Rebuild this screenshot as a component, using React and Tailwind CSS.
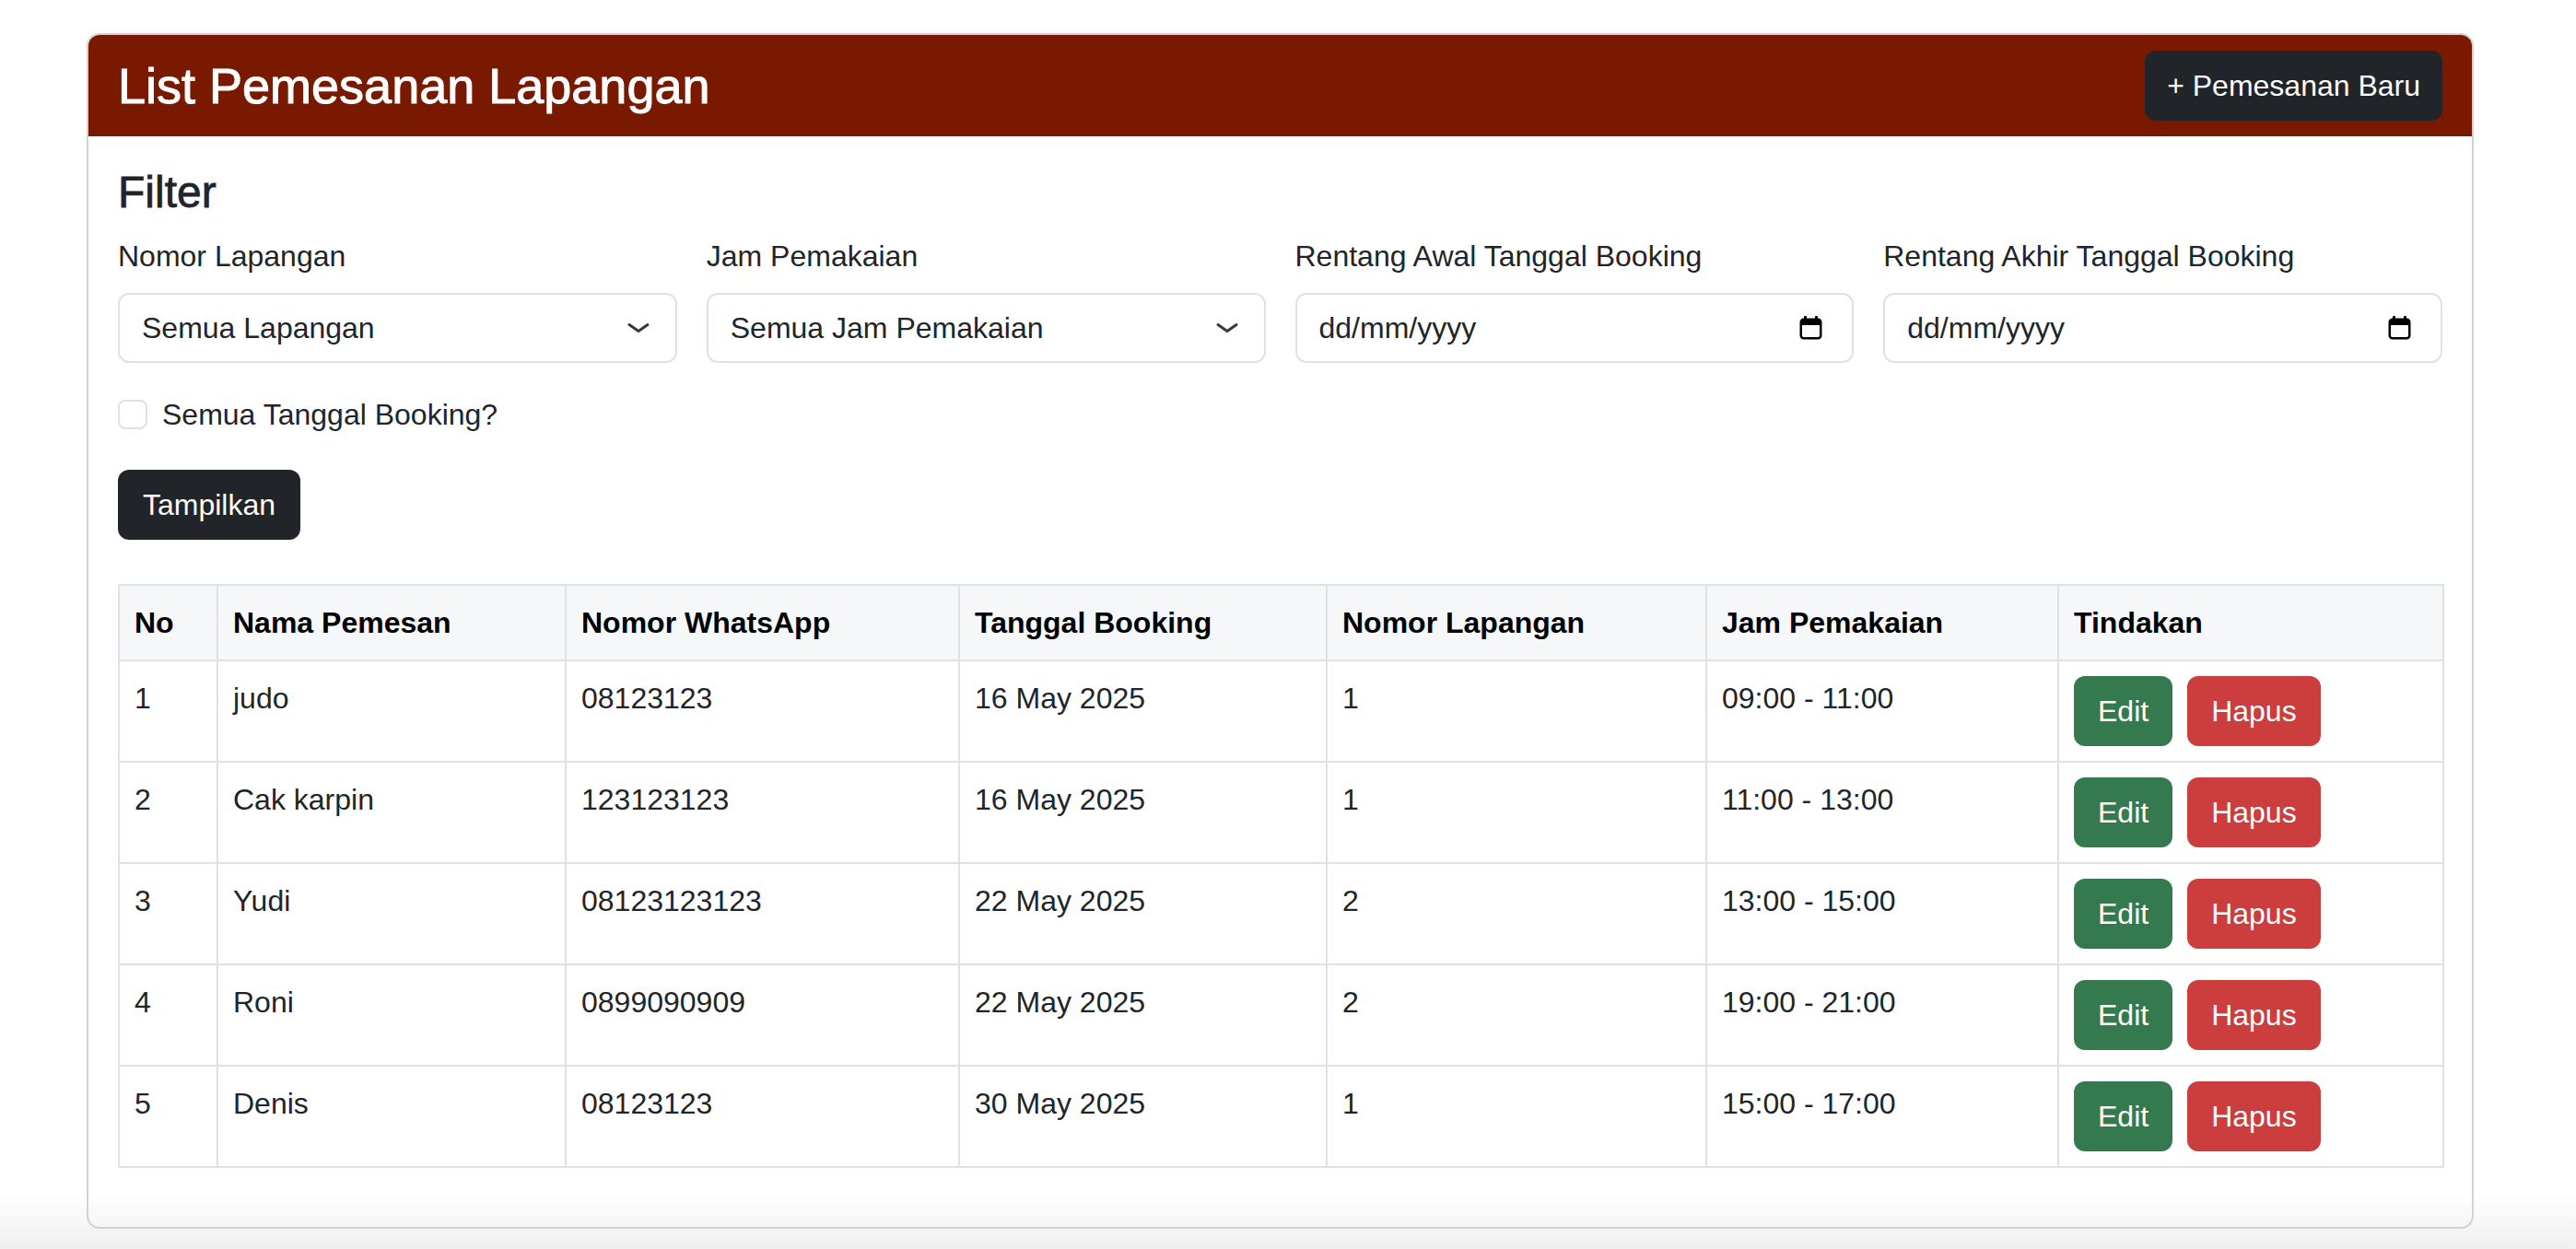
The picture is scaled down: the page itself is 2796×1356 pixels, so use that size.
import React from "react";

const rows = [
  ["1", "judo", "08123123", "16 May 2025", "1", "09:00 - 11:00"],
  ["2", "Cak karpin", "123123123", "16 May 2025", "1", "11:00 - 13:00"],
  ["3", "Yudi", "08123123123", "22 May 2025", "2", "13:00 - 15:00"],
  ["4", "Roni", "0899090909", "22 May 2025", "2", "19:00 - 21:00"],
  ["5", "Denis", "08123123", "30 May 2025", "1", "15:00 - 17:00"],
];

function Chevron() {
  return (
    <svg width="24" height="12" viewBox="0 0 24 12" fill="none">
      <path d="M2 2.5 L12 9.5 L22 2.5" stroke="#343a40" strokeWidth="3" strokeLinecap="round" strokeLinejoin="round" />
    </svg>
  );
}

function CalendarIcon() {
  return (
    <svg width="25" height="26" viewBox="0 0 25 26" fill="none">
      <rect x="5" y="0" width="3" height="5" rx="1" fill="#000" />
      <rect x="17" y="0" width="3" height="5" rx="1" fill="#000" />
      <rect x="1.75" y="3.75" width="21.5" height="20.5" rx="3" stroke="#000" strokeWidth="2.5" />
      <path d="M1.5 7a3.5 3.5 0 0 1 3.5-3.5h15a3.5 3.5 0 0 1 3.5 3.5v3h-22z" fill="#000" />
    </svg>
  );
}

function SelectBox({ text }) {
  return (
    <div className="h-[76px] border-2 border-[#dee2e6] rounded-[12px] pl-[24px] pr-[28px] flex items-center justify-between bg-white">
      <span className="text-[32px] leading-[48px] text-[#212529]">{text}</span>
      <Chevron />
    </div>
  );
}

function DateBox() {
  return (
    <div className="h-[76px] border-2 border-[#dee2e6] rounded-[12px] pl-[24px] pr-[32px] flex items-center justify-between bg-white">
      <span className="text-[32px] leading-[48px] text-[#212529]">dd/mm/yyyy</span>
      <CalendarIcon />
    </div>
  );
}

function Field({ label, children }) {
  return (
    <div className="flex flex-col">
      <label className="text-[32px] leading-[48px] text-[#212529] mb-[16px]">{label}</label>
      {children}
    </div>
  );
}

export default function App() {
  const ths = [
    ["No", "w-[107px]"],
    ["Nama Pemesan", "w-[378px]"],
    ["Nomor WhatsApp", "w-[427px]"],
    ["Tanggal Booking", "w-[399px]"],
    ["Nomor Lapangan", "w-[412px]"],
    ["Jam Pemakaian", "w-[382px]"],
    ["Tindakan", "w-[418px]"],
  ];
  return (
    <div className="min-h-[1356px] bg-[linear-gradient(to_bottom,#ffffff_1296px,#efefef_1356px)] pt-[36px] pl-[94px] pr-[111px] font-['Liberation_Sans',Arial,sans-serif]">
      <div className="border-2 border-[#d2d2d2] rounded-[14px] overflow-hidden">
        <div className="bg-[#781900] h-[110px] px-[32px] flex items-center justify-between">
          <h3 className="text-white text-[54px] leading-[1.2] font-medium [-webkit-text-stroke:1px_#ffffff]">List Pemesanan Lapangan</h3>
          <button className="h-[76px] px-[24px] bg-[#212529] rounded-[12px] text-white text-[32px] leading-[48px]">
            + Pemesanan Baru
          </button>
        </div>
        <div className="p-[32px]">
          <h4 className="text-[48px] leading-[1.2] font-medium text-[#212529] mb-[16px] [-webkit-text-stroke:0.8px_#212529]">Filter</h4>
          <div className="grid grid-cols-4 gap-x-[32px]">
            <Field label="Nomor Lapangan">
              <SelectBox text="Semua Lapangan" />
            </Field>
            <Field label="Jam Pemakaian">
              <SelectBox text="Semua Jam Pemakaian" />
            </Field>
            <Field label="Rentang Awal Tanggal Booking">
              <DateBox />
            </Field>
            <Field label="Rentang Akhir Tanggal Booking">
              <DateBox />
            </Field>
          </div>
          <div className="mt-[32px] mb-[4px] h-[48px] flex items-center gap-[16px]">
            <span className="w-[32px] h-[32px] border-2 border-[#dee2e6] rounded-[8px] bg-white"></span>
            <span className="text-[32px] leading-[48px] text-[#212529]">Semua Tanggal Booking?</span>
          </div>
          <button className="mt-[32px] h-[76px] px-[27px] bg-[#212529] rounded-[12px] text-white text-[32px] leading-[48px]">
            Tampilkan
          </button>
          <table className="mt-[48px] mb-[32px] w-full table-fixed border-collapse text-[32px] leading-[48px]">
            <thead>
              <tr className="bg-[#f6f7f9]">
                {ths.map(([t, w]) => (
                  <th key={t} className={`${w} border-2 border-[#dee2e6] px-[16px] py-[16px] text-left font-bold text-black`}>
                    {t}
                  </th>
                ))}
              </tr>
            </thead>
            <tbody>
              {rows.map((r) => (
                <tr key={r[0]} className="bg-white">
                  {r.map((c, i) => (
                    <td key={i} className="border-2 border-[#dee2e6] px-[16px] py-[16px] align-top text-[#212529]">
                      {c}
                    </td>
                  ))}
                  <td className="border-2 border-[#dee2e6] px-[16px] py-[16px] align-top">
                    <div className="flex gap-[16px]">
                      <button className="h-[76px] px-[26px] bg-[#357a4f] rounded-[12px] text-white">Edit</button>
                      <button className="h-[76px] px-[26px] bg-[#cc3d3d] rounded-[12px] text-white">Hapus</button>
                    </div>
                  </td>
                </tr>
              ))}
            </tbody>
          </table>
        </div>
      </div>
    </div>
  );
}
